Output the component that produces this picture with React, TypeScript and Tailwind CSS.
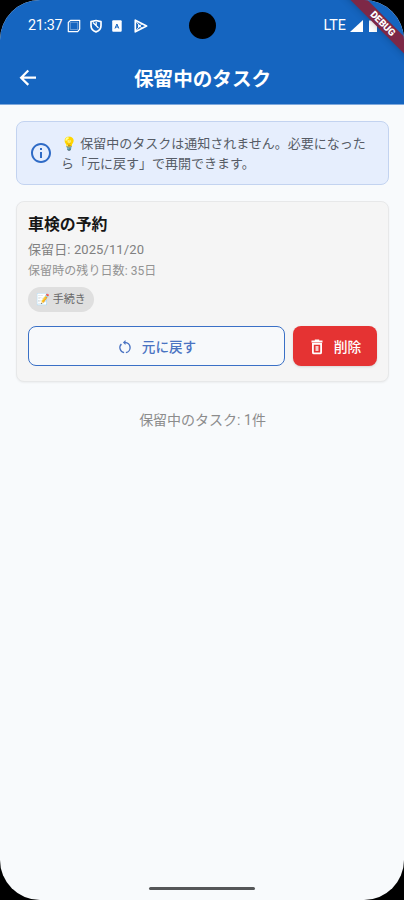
import type { ReactNode } from 'react';
import { MdInfoOutline } from 'react-icons/md';

interface PendingTask {
  id: number;
  title: string;
  pausedAt: string;
  daysLeft: number;
  category: string;
}

const tasks: PendingTask[] = [
  { id: 1, title: '車検の予約', pausedAt: '2025/11/20', daysLeft: 35, category: '手続き' },
];

function StatusBar() {
  return (
    <div className="flex h-[51px] items-center pl-7 pr-5 text-white">
      <span className="w-[39px] whitespace-nowrap text-[14.4px] tracking-[-0.3px]">21:37</span>
      {/* Notification icons */}
      <svg className="h-3.5 w-3.5" viewBox="0 0 14 14" fill="none" stroke="currentColor">
        <path d="M3.5 1.300H12.700v8.900l-2 2.400H1.300V3.500z" strokeWidth="1.200" strokeLinejoin="round" />
        <path d="M3.300 3.300h7.400v7.200H3.300z" strokeWidth=".7" opacity=".5" />
      </svg>
      <svg className="ml-2 h-3.5 w-3.5" viewBox="0 0 14 14" fill="none" stroke="currentColor">
        <path
          d="M7 1.500 12 2.700v4c0 2.800-2 5-5 6.200-3-1.200-5-3.400-5-6.200v-4z"
          strokeWidth="1.700"
          strokeLinejoin="round"
        />
        <path d="M4 3.500 9.500 9M7.200 6.700V3" strokeWidth="1.200" />
      </svg>
      <svg className="ml-[9px] h-3 w-2.5" viewBox="0 0 10 12">
        <rect width="9.500" height="11.500" x=".2" y=".3" rx="1" fill="currentColor" />
        <path d="M3 8.500 4.900 4 6.800 8.500M3.600 7h2.600" fill="none" stroke="#1565c0" />
      </svg>
      <svg className="ml-3 h-3.5 w-3.5" viewBox="0 0 14 14" fill="none" stroke="currentColor">
        <path d="M1.300 1.200 12.600 7 1.300 12.800z" strokeWidth="1.700" strokeLinejoin="round" />
        <path d="m2 2.500 6 7M2 11.500l6-7" strokeWidth="1" />
        <circle cx="5.200" cy="7" r="1.300" fill="currentColor" stroke="none" />
      </svg>
      <span className="ml-auto text-[14.300px]">LTE</span>
      <svg className="ml-1 h-3 w-[13px]" viewBox="0 0 13 12">
        <path d="M13 0v12H0z" fill="currentColor" />
      </svg>
      <svg className="ml-[6px] mr-[7px] h-[13px] w-2" viewBox="0 0 8 13">
        <path d="M2.500 0h3v1.500H8V13H0V1.500h2.500z" fill="currentColor" />
      </svg>
    </div>
  );
}

function DebugBanner() {
  return (
    <div className="absolute -right-[28px] top-[17px] flex h-3 w-[100px] rotate-45 items-center justify-center bg-[#7d2846] pl-0.5 text-[9.800px] font-black tracking-[-0.1px] text-white shadow-md">
      DEBUG
    </div>
  );
}

function BackIcon() {
  return (
    <svg className="ml-4 size-6" viewBox="0 0 24 24" fill="none" stroke="currentColor" strokeWidth="2.200">
      <path d="M20 11.700H5.500M12.300 4.500l-7.200 7.200 7.200 7.200" />
    </svg>
  );
}

/** Nearly closed ring with an arrow head at the top */
function RestoreIcon() {
  return (
    <svg className="mr-[9px] size-4" viewBox="0 0 16 16" fill="none" stroke="currentColor" strokeWidth="1.400">
      <path d="M7.100 13.620A5.100 5.100 0 0 1 4.400 5M8 3.500A5.100 5.100 0 0 1 8.900 13.620" />
      <path d="M8.500 .9v5.200L5.900 3.500z" fill="currentColor" stroke="none" />
    </svg>
  );
}

function TrashIcon() {
  return (
    <svg className="mr-[9px] h-[17px] w-4" viewBox="0 0 16 17" fill="none" stroke="currentColor">
      <path d="M2.500 2.500h11M5.800 1.500h4.400" strokeWidth="1.800" />
      <path d="M3.900 4.900h8.200v8.500c0 .6-.4 1-1 1H4.900c-.6 0-1-.4-1-1z" strokeWidth="1.800" />
      <path d="M6.500 7h3v5h-3z" fill="currentColor" stroke="none" opacity=".75" />
    </svg>
  );
}

function Notice({ children }: { children: ReactNode }) {
  return (
    <div className="flex h-16 items-center rounded-lg border border-[#c3d3f0] bg-[#e6eefd] pl-3">
      <MdInfoOutline className="size-6 shrink-0 text-[#2f6bc6]" />
      <p className="ml-2 whitespace-nowrap pt-px text-[13px] leading-[19.500px] text-[#565c66]">{children}</p>
    </div>
  );
}

function TaskCard({ task }: { task: PendingTask }) {
  return (
    <article className="mt-4 h-[181px] rounded-lg border border-[#e7e8e9] bg-[#f5f5f5] px-[11px] pt-[11px] shadow-xs">
      <h2 className="text-[15.900px] font-bold leading-6 text-[#161616]">{task.title}</h2>
      <p className="mt-[3px] text-[13px] leading-5 tracking-[0.1px] text-[#808080]">保留日: {task.pausedAt}</p>
      <p className="mt-px text-[12px] leading-5 tracking-[0.08px] text-[#939393]">
        保留時の残り日数: {task.daysLeft}日
      </p>
      <div className="mt-1.5 flex h-[25px] w-[66px] items-center justify-center rounded-full bg-[#dfdfdf] pt-0.5 text-[11px] text-[#666]">
        📝 {task.category}
      </div>
      <div className="mt-[14px] flex gap-2">
        <button className="flex h-10 w-[257px] items-center justify-center rounded-lg border border-[#3a70c6] bg-[#f7f9fb] pt-0.5 text-[13.600px] font-medium text-[#4a73c2]">
          <RestoreIcon />
          元に戻す
        </button>
        <button className="flex h-10 flex-1 items-center justify-center rounded-lg bg-[#e53333] pt-0.5 text-[13.800px] font-medium text-white shadow">
          <TrashIcon />
          削除
        </button>
      </div>
    </article>
  );
}

export default function App() {
  return (
    <div
      lang="ja"
      className="relative h-[900px] w-[404px] overflow-hidden bg-black font-[Roboto,'Noto_Sans_CJK_JP',sans-serif]"
    >
      <div className="relative flex h-full flex-col overflow-hidden rounded-[40px] bg-[#f8fafc]">
        <header className="h-[105px] border-b border-[#7ea8dc] bg-[#1565c0] text-white">
          <StatusBar />
          <div className="flex h-[53px] items-center">
            <BackIcon />
            <h1 className="ml-[94px] pt-1 text-[19.600px] font-bold">保留中のタスク</h1>
          </div>
        </header>
        <main className="pl-4 pr-[15px] pt-4">
          <Notice>
            💡 保留中のタスクは通知されません。必要になった
            <br />
            ら「元に戻す」で再開できます。
          </Notice>
          {tasks.map((task) => (
            <TaskCard key={task.id} task={task} />
          ))}
          <p className="mt-7 text-center text-[14px] leading-5 text-[#8c8c8c]">保留中のタスク: {tasks.length}件</p>
        </main>
        <div className="mx-auto mb-[10px] mt-auto h-[3px] w-[106px] rounded-full bg-[#555658]" />
        <div className="absolute left-[189px] top-3 size-[27px] rounded-full bg-black" />
        <DebugBanner />
      </div>
    </div>
  );
}
